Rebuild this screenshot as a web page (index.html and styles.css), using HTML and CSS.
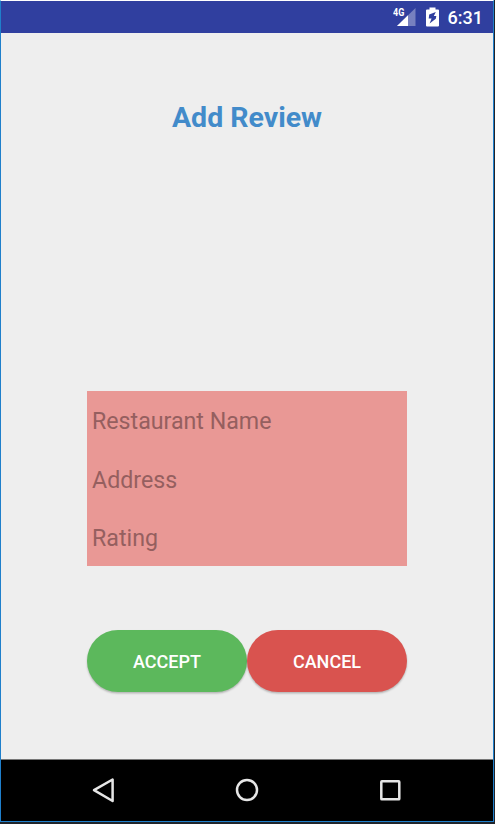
FILE: index.html
```html
<!DOCTYPE html>
<html lang="en">
<head>
<meta charset="utf-8">
<title>Add Review</title>
<link rel="stylesheet" href="styles.css">
</head>
<body>
<div class="device">
  <header class="status">
    <span class="network"><svg class="signal" width="24" height="20" viewBox="0 0 24 20"><path d="M23.500 1V19H5Z" fill="#7780bf"/><path d="M16 8.300V19H5Z" fill="#fff"/></svg><span class="network-label">4G</span></span>
    <svg class="battery" width="13" height="20" viewBox="0 0 13 20"><path fill="#fff" fill-rule="evenodd" d="M3.500 .5h6v2H12q1 0 1 1v15q0 1-1 1H1q-1 0-1-1v-15q0-1 1-1h2.500ZM9.800 5 3.200 7.500 2.700 11.500H5.600L3.600 16.500 9.800 11.800 10.300 9H7.800Z"/></svg>
    <time class="clock">6:31</time>
  </header>
  <main class="screen">
    <h1 class="title">Add Review</h1>
    <form class="review">
      <div class="fields">
        <div class="field">Restaurant Name</div>
        <div class="field">Address</div>
        <div class="field">Rating</div>
      </div>
      <div class="actions">
        <button type="button" class="button accept">ACCEPT</button>
        <button type="button" class="button cancel">CANCEL</button>
      </div>
    </form>
  </main>
  <nav class="navbar">
    <svg width="26" height="26" viewBox="0 0 26 26"><path d="M21.600 2.500V24L3 13.200Z"/></svg>
    <svg width="26" height="26" viewBox="0 0 26 26"><circle cx="13" cy="13" r="10"/></svg>
    <svg width="26" height="26" viewBox="0 0 26 26"><rect x="4.300" y="4.300" width="18" height="18" rx=".6"/></svg>
  </nav>
</div>
</body>
</html>
```
FILE: styles.css
```css
* { box-sizing: border-box; }
body {
  margin: 0;
  height: 824px;
  padding: 0 1px 2px 0;
  background: #20242a;
  font-family: Roboto, sans-serif;
  overflow: hidden;
}
.device {
  display: flex;
  flex-direction: column;
  height: 822px;
  border: 1px solid #1f7fcb;
  border-top-color: #fff;
  background: #eee;
}
.status {
  display: flex;
  justify-content: flex-end;
  align-items: flex-start;
  height: 32px;
  padding: 6px 10px 0 0;
  background: #303f9f;
  color: #fff;
}
.network { position: relative; display: flex; }
.network-label {
  position: absolute;
  left: 1px;
  top: 1px;
  font-size: 10px;
  line-height: 10px;
  font-weight: 700;
  transform: scale(.9, 1.08);
  transform-origin: left;
}
.battery { margin-left: 10px; }
.clock { margin-left: 9px; font-size: 18px; line-height: 21px; font-weight: 500; }
.screen { flex: 1; padding: 67px 86px 0; }
.title {
  margin: 0;
  color: #428bca;
  font-size: 28.500px;
  line-height: 36px;
  font-weight: 700;
  text-align: center;
}
.fields { margin-top: 255px; background: #e99895; }
.field {
  height: 58.330px;
  padding: 16.300px 5px 0;
  color: #955f5f;
  font-size: 23.200px;
  line-height: 28px;
}
.actions { display: flex; margin-top: 64px; }
.button {
  flex: 1;
  height: 62px;
  border: 0;
  border-radius: 31px;
  padding: 2px 0 0;
  color: #fff;
  font: 500 18px/22px Roboto, sans-serif;
  box-shadow: 0 1.500px 2px rgba(0, 0, 0, .24);
}
.accept { background: #5cb85c; }
.cancel { background: #d9534f; }
.navbar {
  display: flex;
  justify-content: space-between;
  align-items: center;
  height: 62px;
  padding: 0 90px 1px;
  border-top: 1px solid #777;
  background: #000;
}
.navbar svg { fill: none; stroke: #e6e6e6; stroke-width: 2.500; stroke-linejoin: round; }
```
